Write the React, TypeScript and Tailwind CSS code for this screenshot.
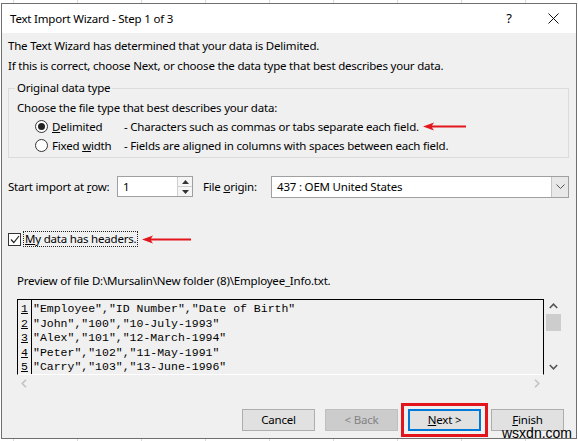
import React from 'react'

const rows = [
  '"Employee","ID Number","Date of Birth"',
  '"John","100","10-July-1993"',
  '"Alex","101","12-March-1994"',
  '"Peter","102","11-May-1991"',
  '"Carry","103","13-June-1996"',
]

const RedArrow = ({ w }: { w: number }) => (
  <svg width={w} height="9" viewBox={`0 0 ${w} 9`} className="inline-block shrink-0">
    <path d={`M0 4.5 L11 0.5 L9 3.4 L${w} 3.4 L${w} 5.6 L9 5.6 L11 8.5 Z`} fill="#e3161d" />
  </svg>
)

const Radio = ({ on }: { on?: boolean }) => (
  <span className="w-[13px] h-[13px] rounded-full border border-[#333] bg-white flex items-center justify-center shrink-0">
    {on && <span className="w-[7px] h-[7px] rounded-full bg-[#222]" />}
  </span>
)

const App = () => {
  return (
    <div className="w-[578px] h-[441px] overflow-hidden relative bg-white bg-[linear-gradient(90deg,#d9d9d9_1px,transparent_1px)] bg-[length:64px_100%] bg-[position:13px_0] pt-[3px] pl-[1px] font-['Noto_Sans',sans-serif] text-[11.5px] tracking-[-0.2px] text-black">
      <div className="w-[576px] h-[436px] border border-[#6f6f6f] flex flex-col bg-[#f0f0f0]">
        {/* title bar */}
        <div className="h-[29px] bg-white flex items-center pl-[8px] shrink-0">
          <span className="flex-1">Text Import Wizard - Step 1 of 3</span>
          <span className="w-[14px] text-center text-[13px]">?</span>
          <div className="w-[45px] ml-[15px] flex justify-center">
            <svg width="11" height="11" viewBox="0 0 11 11">
              <path d="M0.5 0.5 L10.5 10.5 M10.5 0.5 L0.5 10.5" stroke="#111" strokeWidth="1" />
            </svg>
          </div>
        </div>

        <div className="px-[6px] flex flex-col">
          <p className="pt-[3px] leading-[20px]">The Text Wizard has determined that your data is Delimited.</p>
          <p className="leading-[20px]">If this is correct, choose Next, or choose the data type that best describes your data.</p>

          <fieldset className="mt-[4px] w-[561px] border border-[#dcdcdc] px-[8px] pb-[2px]">
            <legend className="ml-[-2px] px-[2px] leading-[16px]">Original data type</legend>
            <p className="leading-[19px] pt-[2px]">Choose the file type that best describes your data:</p>
            <div className="flex items-center h-[19px] pl-[18px]">
              <Radio on />
              <span className="ml-[4px] w-[72px]"><u>D</u>elimited</span>
              <span>- Characters such as commas or tabs separate each field.</span>
              <span className="ml-[4px] flex"><RedArrow w={43} /></span>
            </div>
            <div className="flex items-center h-[19px] pl-[18px]">
              <Radio />
              <span className="ml-[4px] w-[72px]">Fixed <u>w</u>idth</span>
              <span>- Fields are aligned in columns with spaces between each field.</span>
            </div>
          </fieldset>

          <div className="mt-[18px] flex items-center h-[21px]">
            <span className="w-[109px] whitespace-nowrap">Start import at <u>r</u>ow:</span>
            <div className="w-[76px] h-[21px] border border-[#a0a0a0] bg-white flex">
              <span className="flex-1 pl-[5px] leading-[19px]">1</span>
              <div className="w-[15px] flex flex-col border-l border-[#d0d0d0]">
                <div className="flex-1 flex items-center justify-center border-b border-[#d0d0d0] bg-[#f5f5f5]">
                  <svg width="7" height="4" viewBox="0 0 7 4"><path d="M0 4 L3.5 0 L7 4 Z" fill="#333" /></svg>
                </div>
                <div className="flex-1 flex items-center justify-center bg-[#f5f5f5]">
                  <svg width="7" height="4" viewBox="0 0 7 4"><path d="M0 0 L3.5 4 L7 0 Z" fill="#333" /></svg>
                </div>
              </div>
            </div>
            <span className="ml-[10px] w-[68px] whitespace-nowrap">File <u>o</u>rigin:</span>
            <div className="w-[298px] h-[22px] border border-[#a0a0a0] bg-white flex">
              <span className="flex-1 pl-[5px] leading-[20px]">437 : OEM United States</span>
              <div className="w-[17px] bg-[#e8e8e8] border-l border-[#c4c4c4] flex items-center justify-center">
                <svg width="9" height="5" viewBox="0 0 9 5"><path d="M0.5 0.5 L4.5 4.5 L8.5 0.5" stroke="#555" fill="none" /></svg>
              </div>
            </div>
          </div>

          <div className="mt-[34px] flex items-center h-[16px]">
            <span className="w-[13px] h-[13px] border border-[#333] bg-white flex items-center justify-center">
              <svg width="10" height="9" viewBox="0 0 10 9"><path d="M1 4.5 L3.8 7.5 L9 1" stroke="#222" strokeWidth="1.2" fill="none" /></svg>
            </span>
            <span className="ml-[2px] px-[1px] border border-dotted border-[#222] leading-[14px]"><u>M</u>y data has headers.</span>
            <span className="ml-[4px] flex"><RedArrow w={49} /></span>
          </div>

          <p className="mt-[26px] pl-[9px] leading-[16px]">Preview of file D:\Mursalin\New folder (8)\Employee_Info.txt.</p>

          <div className="mt-[10px] ml-[9px] w-[545px] flex flex-col">
            <div className="flex h-[76px]">
              <div className="w-[527px] border-t border-l border-r border-black border-b border-b-white flex overflow-hidden font-['Liberation_Mono',monospace] text-[11.5px] tracking-normal leading-[14.5px]">
                <div className="w-[14px] border-r border-black pt-[2px] flex flex-col items-center shrink-0">
                  {[1, 2, 3, 4, 5].map((n) => (
                    <span key={n} className="underline">{n}</span>
                  ))}
                </div>
                <div className="pt-[2px] pl-[1px] flex flex-col whitespace-pre">
                  {rows.map((r) => (
                    <span key={r}>{r}</span>
                  ))}
                </div>
              </div>
              <div className="w-[18px] flex flex-col items-center pt-[4px]">
                <svg width="9" height="6" viewBox="0 0 9 6"><path d="M0.8 5 L4.5 1.2 L8.2 5" stroke="#555" strokeWidth="1.6" fill="none" /></svg>
                <div className="mt-[5px] w-[15px] h-[17px] bg-[#cdcdcd]" />
                <div className="flex-1" />
                <svg className="mb-[5px]" width="9" height="6" viewBox="0 0 9 6"><path d="M0.8 1 L4.5 4.8 L8.2 1" stroke="#555" strokeWidth="1.6" fill="none" /></svg>
              </div>
            </div>
            <div className="h-[17px] w-[527px] flex items-center justify-between px-[4px]">
              <svg width="6" height="9" viewBox="0 0 6 9"><path d="M5 0.8 L1.2 4.5 L5 8.2" stroke="#c2c2c2" strokeWidth="1.6" fill="none" /></svg>
              <svg width="6" height="9" viewBox="0 0 6 9"><path d="M1 0.8 L4.8 4.5 L1 8.2" stroke="#c2c2c2" strokeWidth="1.6" fill="none" /></svg>
            </div>
          </div>

          <div className="mt-[17px] flex justify-end gap-[10px] pr-[6px]">
            <button className="w-[73px] h-[22px] bg-[#e1e1e1] border border-[#adadad]">Cancel</button>
            <button className="w-[73px] h-[22px] bg-[#cccccc] border border-[#bfbfbf] text-[#838383]">&lt; Back</button>
            <div className="-mx-[7px] -my-[6px] border-[3px] border-[#e3141b] px-[4px] py-[3px]">
              <button className="w-[73px] h-[22px] bg-[#e1e1e1] border-2 border-[#0078d7] leading-[16px]"><u>N</u>ext &gt;</button>
            </div>
            <button className="w-[73px] h-[22px] bg-[#e1e1e1] border border-[#adadad]"><u>F</u>inish</button>
          </div>
        </div>
      </div>
      <span className="absolute left-[502px] top-[426px] text-[14px] leading-[14px] font-['Liberation_Sans',sans-serif] tracking-normal text-black">wsxdn.com</span>
    </div>
  )
}

export default App
